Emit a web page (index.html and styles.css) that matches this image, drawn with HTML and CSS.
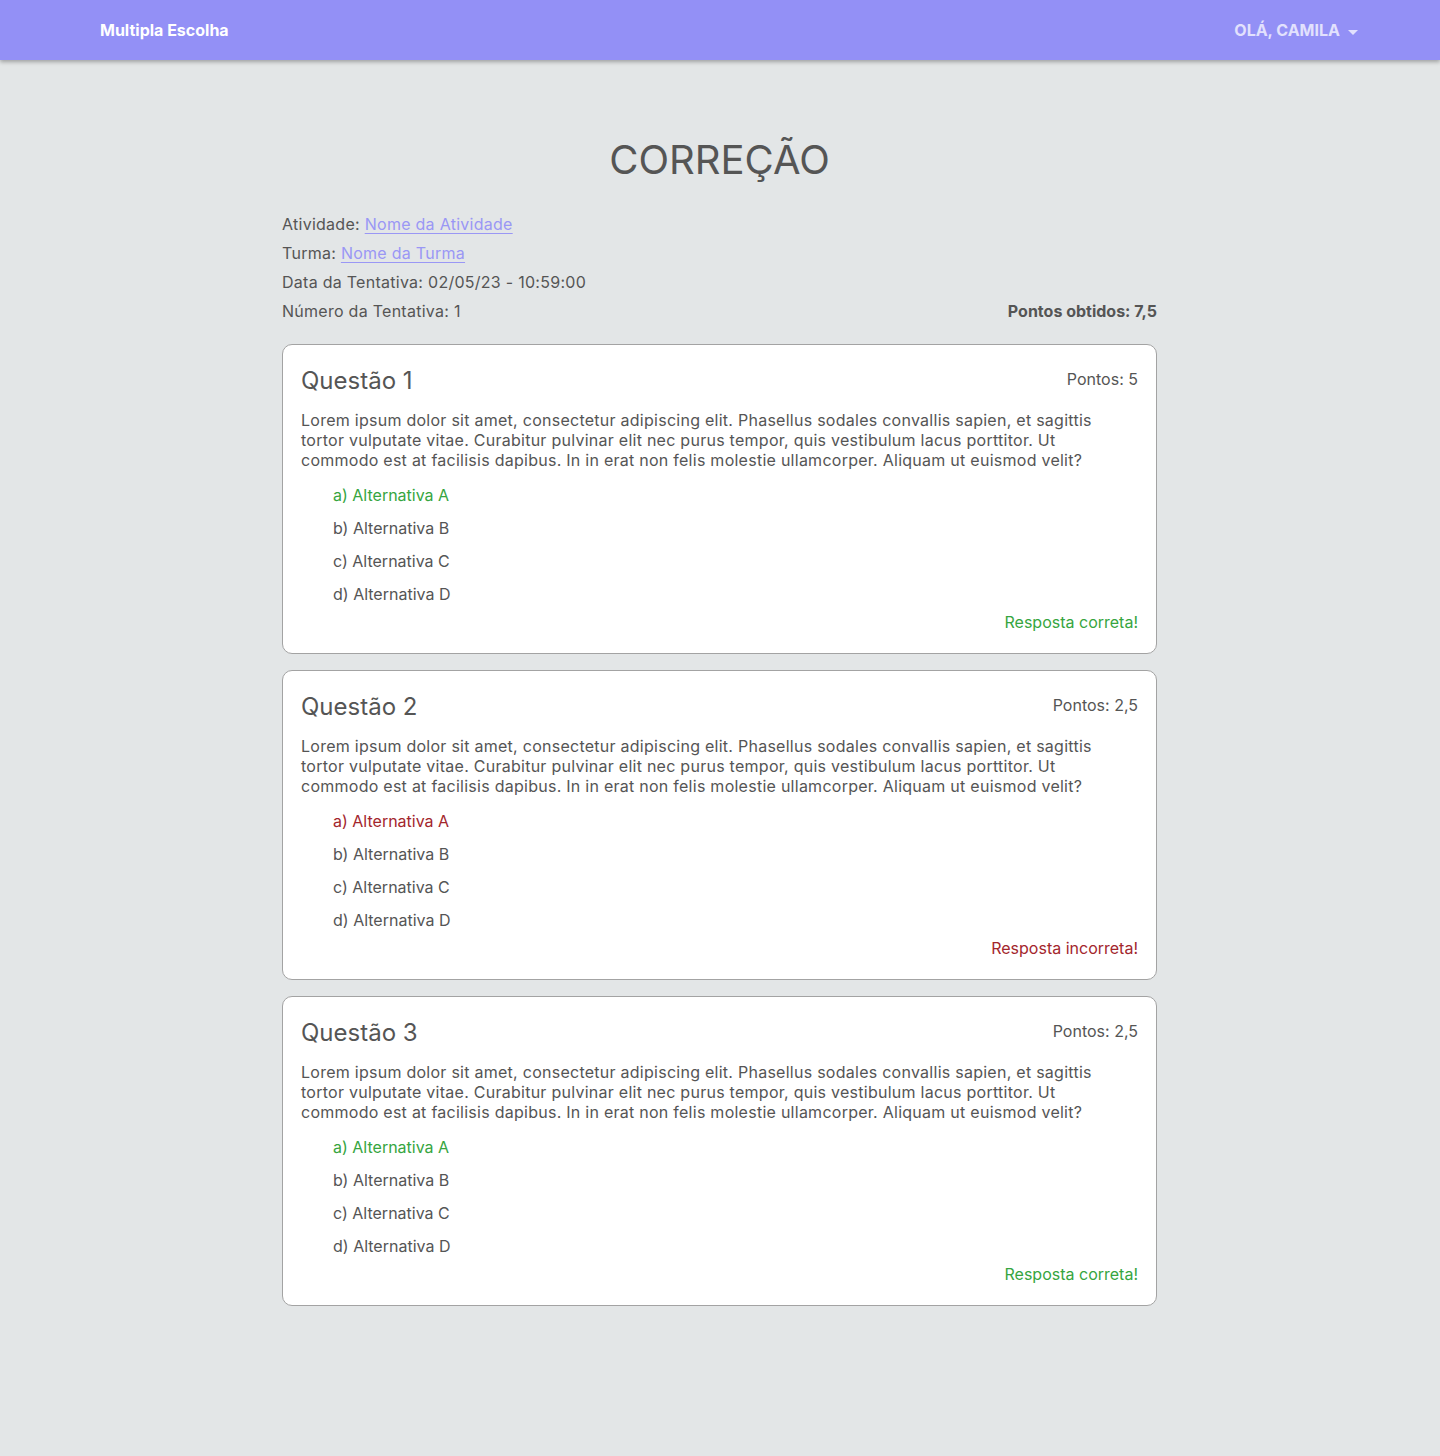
FILE: index.html
```html
<!DOCTYPE html>
<html lang="pt-BR">
<head>
<meta charset="utf-8">
<title>Correção</title>
<link rel="stylesheet" href="styles.css">
</head>
<body>
<header class="topbar">
  <div class="brand">Multipla Escolha</div>
  <div class="user">OLÁ, CAMILA <span class="caret"></span></div>
</header>
<main class="page">
  <h1 class="title">CORREÇÃO</h1>
  <section class="info">
    <p>Atividade: <a href="#">Nome da Atividade</a></p>
    <p>Turma: <a href="#">Nome da Turma</a></p>
    <p>Data da Tentativa: 02/05/23 - 10:59:00</p>
    <p class="info-last"><span>Número da Tentativa: 1</span><strong>Pontos obtidos: 7,5</strong></p>
  </section>

  <article class="card">
    <div class="card-head"><h2>Questão 1</h2><span class="pts">Pontos: 5</span></div>
    <p class="q">Lorem ipsum dolor sit amet, consectetur adipiscing elit. Phasellus sodales convallis sapien, et sagittis tortor vulputate vitae. Curabitur pulvinar elit nec purus tempor, quis vestibulum lacus porttitor. Ut commodo est at facilisis dapibus. In in erat non felis molestie ullamcorper. Aliquam ut euismod velit?</p>
    <ul class="alts">
      <li class="ok">a) Alternativa A</li>
      <li>b) Alternativa B</li>
      <li>c) Alternativa C</li>
      <li>d) Alternativa D</li>
    </ul>
    <p class="result ok">Resposta correta!</p>
  </article>

  <article class="card">
    <div class="card-head"><h2>Questão 2</h2><span class="pts">Pontos: 2,5</span></div>
    <p class="q">Lorem ipsum dolor sit amet, consectetur adipiscing elit. Phasellus sodales convallis sapien, et sagittis tortor vulputate vitae. Curabitur pulvinar elit nec purus tempor, quis vestibulum lacus porttitor. Ut commodo est at facilisis dapibus. In in erat non felis molestie ullamcorper. Aliquam ut euismod velit?</p>
    <ul class="alts">
      <li class="bad">a) Alternativa A</li>
      <li>b) Alternativa B</li>
      <li>c) Alternativa C</li>
      <li>d) Alternativa D</li>
    </ul>
    <p class="result bad">Resposta incorreta!</p>
  </article>

  <article class="card">
    <div class="card-head"><h2>Questão 3</h2><span class="pts">Pontos: 2,5</span></div>
    <p class="q">Lorem ipsum dolor sit amet, consectetur adipiscing elit. Phasellus sodales convallis sapien, et sagittis tortor vulputate vitae. Curabitur pulvinar elit nec purus tempor, quis vestibulum lacus porttitor. Ut commodo est at facilisis dapibus. In in erat non felis molestie ullamcorper. Aliquam ut euismod velit?</p>
    <ul class="alts">
      <li class="ok">a) Alternativa A</li>
      <li>b) Alternativa B</li>
      <li>c) Alternativa C</li>
      <li>d) Alternativa D</li>
    </ul>
    <p class="result ok">Resposta correta!</p>
  </article>
</main>
</body>
</html>
```

FILE: styles.css
```css
* { box-sizing: border-box; }
html, body { margin: 0; padding: 0; }
body {
  background: #e3e6e7;
  font-family: Inter, "Noto Sans", sans-serif;
  color: #555;
  min-height: 1456px;
}
.topbar {
  height: 60px;
  background: #9390f6;
  display: flex;
  align-items: center;
  justify-content: space-between;
  padding: 0 82px 0 100px;
  box-shadow: 0 2px 4px rgba(0,0,0,0.3);
}
.brand { color: #fff; font-weight: 700; font-size: 16px; }
.user {
  color: #e2e1fd;
  font-weight: 700;
  font-size: 16px;
  display: flex;
  align-items: center;
}
.caret {
  display: inline-block;
  width: 0; height: 0;
  margin-left: 8px;
  margin-top: 4px;
  border-left: 5px solid transparent;
  border-right: 5px solid transparent;
  border-top: 5px solid #e2e1fd;
}
.page {
  width: 876px;
  margin: 0 auto;
  padding: 0 1px 40px 0;
}
.title {
  margin: 76px 0 0;
  text-align: center;
  font-size: 40px;
  line-height: 48px;
  font-weight: 400;
  color: #555;
}
.info { margin-top: 26px; }
.info p {
  margin: 0;
  font-size: 16px;
  line-height: 29px;
  letter-spacing: 0.27px;
}
.info a { color: #9a97f5; text-decoration: underline; text-underline-offset: 3px; }
.info-last { display: flex; justify-content: space-between; }
.info-last strong { font-weight: 700; letter-spacing: 0; }
.card {
  background: #fff;
  border: 1px solid #a3a3a3;
  border-radius: 10px;
  padding: 21px 18px 21px 18px;
  margin-top: 16px;
}
.card:first-of-type { margin-top: 18px; }
.card-head {
  display: flex;
  justify-content: space-between;
  align-items: center;
}
.card-head h2 {
  margin: 0;
  font-size: 24px;
  line-height: 29px;
  font-weight: 400;
  color: #555;
}
.pts { font-size: 16px; color: #555; margin-bottom: 3px; }
.q {
  margin: 15px 0 0;
  padding-right: 24px;
  font-size: 16px;
  line-height: 20px;
  letter-spacing: 0.26px;
}
.alts {
  list-style: none;
  margin: 9px 0 0;
  padding: 0 0 0 32px;
}
.alts li { font-size: 16px; line-height: 33px; }
.ok { color: #36a540; }
.bad { color: #a3262d; }
.result {
  margin: 1px 0 0;
  text-align: right;
  font-size: 16px;
  line-height: 20px;
}
```
